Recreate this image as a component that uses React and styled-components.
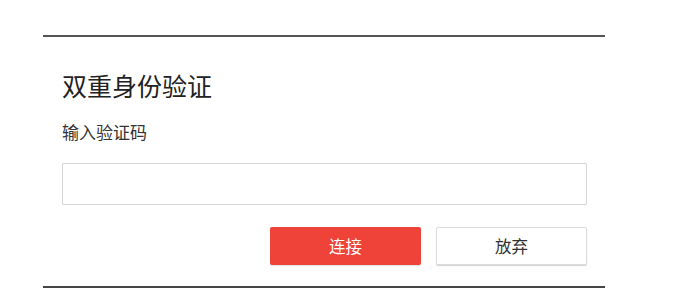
import React from "react";
import styled, { createGlobalStyle } from "styled-components";

const Global = createGlobalStyle`
  html, body { margin: 0; padding: 0; background: #fff; }
  body { font-family: "Microsoft YaHei", "Noto Sans CJK SC", "Noto Sans", sans-serif; }
`;

const Panel = styled.div`
  margin: 35px 0 0 43px;
  width: 562px;
  box-sizing: border-box;
  border-top: 2px solid #555;
  border-bottom: 2px solid #454545;
  padding: 33px 18px 21px 19px;
`;

const Title = styled.h2`
  margin: 0;
  font-size: 25px;
  line-height: 30px;
  font-weight: 400;
  color: #222;
`;

const Label = styled.div`
  margin-top: 22px;
  font-size: 17px;
  line-height: 20px;
  color: #333;
`;

const Input = styled.input`
  display: block;
  box-sizing: border-box;
  width: 100%;
  height: 42px;
  margin-top: 21px;
  border: 1px solid #d6d6d6;
  border-radius: 1px;
  outline: none;
  background: #fff;
`;

const Actions = styled.div`
  display: flex;
  justify-content: flex-end;
  gap: 15px;
  margin-top: 22px;
`;

const Button = styled.button`
  box-sizing: border-box;
  width: 151px;
  height: 38px;
  border-radius: 2px;
  font-family: inherit;
  font-size: 16.5px;
  cursor: pointer;
  background: ${(p) => (p.$primary ? "#ef4238" : "#fff")};
  color: ${(p) => (p.$primary ? "#fff" : "#333")};
  border: ${(p) => (p.$primary ? "none" : "1px solid #dcdcdc")};
  box-shadow: ${(p) => (p.$primary ? "0 1px 1px rgba(0,0,0,0.12)" : "0 1px 1px rgba(0,0,0,0.18)")};
`;

export default function App() {
  return (
    <>
      <Global />
      <Panel>
        <Title>双重身份验证</Title>
        <Label>输入验证码</Label>
        <Input type="text" />
        <Actions>
          <Button $primary>连接</Button>
          <Button>放弃</Button>
        </Actions>
      </Panel>
    </>
  );
}
